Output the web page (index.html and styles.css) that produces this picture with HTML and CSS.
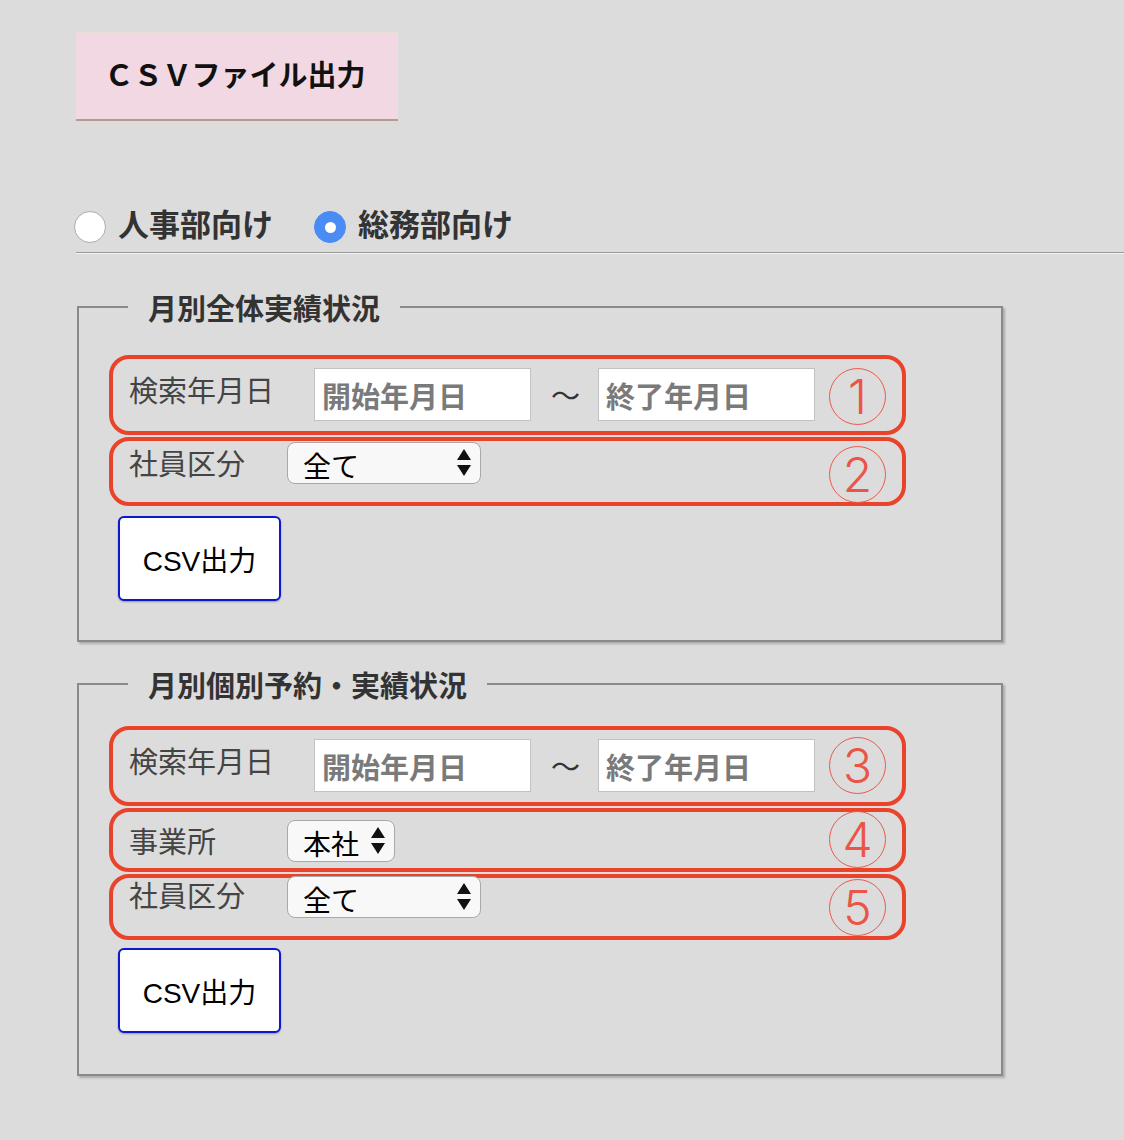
FILE: index.html
```html
<!DOCTYPE html>
<html lang="ja">
<head>
<meta charset="utf-8">
<title>CSVファイル出力</title>
<link rel="stylesheet" href="styles.css">
</head>
<body>
<div class="page">
  <div class="title">ＣＳＶファイル出力</div>

  <div class="tabs">
    <label class="radio"><span class="radio-dot"></span><span class="radio-text">人事部向け</span></label>
    <label class="radio radio--on"><span class="radio-dot"></span><span class="radio-text">総務部向け</span></label>
  </div>
  <div class="rule"></div>

  <fieldset class="panel panel--first">
    <legend class="legend">月別全体実績状況</legend>
    <div class="panel-body panel-body--first">
      <div class="box box--date">
        <span class="label label--wide">検索年月日</span>
        <input class="date" type="text" placeholder="開始年月日">
        <span class="tilde">〜</span>
        <input class="date" type="text" placeholder="終了年月日">
        <span class="num">1</span>
      </div>
      <div class="box box--kbn">
        <span class="label">社員区分</span>
        <span class="select select--wide">
          <span class="select-text">全て</span>
          <svg class="arrows" width="14" height="28" viewBox="0 0 14 28"><path d="M7 0 L14 11 L0 11 Z M0 16 L14 16 L7 27 Z" fill="#111"/></svg>
        </span>
        <span class="num">2</span>
      </div>
      <button class="csv-btn" type="button">CSV出力</button>
    </div>
  </fieldset>

  <fieldset class="panel panel--second">
    <legend class="legend">月別個別予約・実績状況</legend>
    <div class="panel-body panel-body--second">
      <div class="box box--date box--date2">
        <span class="label label--wide">検索年月日</span>
        <input class="date" type="text" placeholder="開始年月日">
        <span class="tilde">〜</span>
        <input class="date" type="text" placeholder="終了年月日">
        <span class="num">3</span>
      </div>
      <div class="box box--office">
        <span class="label">事業所</span>
        <span class="select select--narrow">
          <span class="select-text">本社</span>
          <svg class="arrows" width="14" height="28" viewBox="0 0 14 28"><path d="M7 0 L14 11 L0 11 Z M0 16 L14 16 L7 27 Z" fill="#111"/></svg>
        </span>
        <span class="num">4</span>
      </div>
      <div class="box box--kbn2">
        <span class="label">社員区分</span>
        <span class="select select--wide">
          <span class="select-text">全て</span>
          <svg class="arrows" width="14" height="28" viewBox="0 0 14 28"><path d="M7 0 L14 11 L0 11 Z M0 16 L14 16 L7 27 Z" fill="#111"/></svg>
        </span>
        <span class="num">5</span>
      </div>
      <button class="csv-btn csv-btn--second" type="button">CSV出力</button>
    </div>
  </fieldset>
</div>
</body>
</html>
```
FILE: styles.css
```css
* { box-sizing: border-box; }

body {
  margin: 0;
  background: #dcdcdc;
  font-family: "Noto Sans CJK JP", "Noto Sans", sans-serif;
  color: #333;
}

.page {
  padding: 32px 0 40px 76px;
}

.title {
  width: 322px;
  height: 89px;
  background: #f2d8e2;
  border-top: 1px solid #e8ddd2;
  border-bottom: 2px solid #b19c8d;
  display: flex;
  align-items: center;
  justify-content: center;
  padding: 0 4px 6px 0;
  font-size: 29px;
  font-weight: 700;
  color: #111;
}

.tabs {
  display: flex;
  align-items: center;
  height: 32px;
  margin: 90px 0 0 -2px;
}

.radio {
  display: flex;
  align-items: center;
  gap: 12px;
  font-size: 31px;
  font-weight: 700;
  color: #333;
  line-height: 32px;
}

.radio + .radio { margin-left: 41px; }

.radio-text { margin-top: -9px; }

.radio-dot {
  width: 32px;
  height: 32px;
  border-radius: 50%;
  background: #fff;
  border: 1px solid #acacac;
  display: flex;
  align-items: center;
  justify-content: center;
}

.radio--on .radio-dot {
  background: #4a8bf5;
  border-color: #4a8bf5;
}

.radio--on .radio-dot::after {
  content: "";
  width: 11px;
  height: 11px;
  border-radius: 50%;
  background: #fff;
}

.rule {
  margin-top: 9px;
  height: 2px;
  border-top: 1px solid #9a9a9a;
  border-bottom: 1px solid #f3f3f3;
}

.panel {
  margin: 38px 0 0 1px;
  width: 926px;
  min-width: 0;
  padding: 0;
  border: 2px solid #8a8a8a;
  box-shadow: 2px 2px 2px rgba(0, 0, 0, 0.22);
}

.panel--second { margin-top: 27px; }

.legend {
  margin-left: 49px;
  padding: 0 20px;
  font-size: 29px;
  font-weight: 700;
  line-height: 30px;
  color: #333;
}

.panel-body { padding: 0 0 39px 30px; }
.panel-body--first { padding-top: 33px; }
.panel-body--second { padding-top: 27px; padding-bottom: 41px; }

.box {
  width: 797px;
  border: 4px solid #e9432b;
  border-radius: 20px;
  display: flex;
  align-items: flex-start;
  padding: 0 16px;
}

.box + .box { margin-top: 2px; }

.box--date { height: 80px; padding-top: 9px; }
.box--date .label { margin-top: 3px; }
.box--date .num { margin-top: 0; }
.box--date2 .num { margin-top: -2px; }

.box--kbn { height: 69px; padding-top: 1px; }
.box--kbn .label { margin-top: 2px; }
.box--kbn .num { margin-top: 4px; }

.box--office { height: 64px; padding-top: 8px; }
.box--office .label { margin-top: 2px; }
.box--office .num { margin-top: -9px; }

.box--kbn2 { height: 66px; }
.box--kbn2 .label { margin-top: -2px; }
.box--kbn2 .select { margin-top: -2px; }
.box--kbn2 .num { margin-top: 1px; }

.label {
  width: 158px;
  flex: none;
  font-size: 29px;
  line-height: 36px;
  color: #444;
}

.label--wide { width: 185px; }

.date {
  width: 217px;
  height: 53px;
  flex: none;
  border: 1px solid #c2c2c2;
  box-shadow: inset 0 0 0 1px #fff;
  background: #fff;
  padding: 0 0 0 7px;
  font-family: inherit;
  font-size: 29px;
  font-weight: 600;
  color: #333;
  outline: none;
}

.date::placeholder { color: #7a7a7a; }

.tilde {
  width: 29px;
  margin: 0 18px 0 20px;
  align-self: flex-start;
  font-size: 29px;
  line-height: 53px;
  color: #333;
}

.select {
  position: relative;
  height: 42px;
  flex: none;
  border: 1px solid #a9a9a9;
  border-radius: 8px;
  background: #f8f8f8;
  display: flex;
  align-items: center;
  padding-left: 15px;
}

.select--wide { width: 194px; }
.select--narrow { width: 108px; }

.select-text {
  font-size: 28px;
  line-height: 40px;
  color: #000;
  margin-top: 4px;
}

.arrows {
  position: absolute;
  right: 9px;
  top: 6px;
}

.num {
  margin-left: auto;
  width: 57px;
  height: 57px;
  flex: none;
  border: 1.5px solid #ec5a4b;
  border-radius: 50%;
  display: flex;
  align-items: center;
  justify-content: center;
  font-family: Inter, "Noto Sans", sans-serif;
  font-size: 48px;
  font-weight: 300;
  line-height: 1;
  color: #ea5546;
}

.csv-btn {
  display: block;
  margin: 10px 0 0 9px;
  width: 163px;
  height: 85px;
  background: #fff;
  border: 2px solid #0a1ac8;
  border-radius: 6px;
  box-shadow: 0 1px 2px rgba(0, 0, 0, 0.3);
  font-family: "Liberation Sans", "Noto Sans CJK JP", sans-serif;
  font-size: 28px;
  color: #000;
  padding: 0;
}

.csv-btn--second { margin-top: 8px; }
```
